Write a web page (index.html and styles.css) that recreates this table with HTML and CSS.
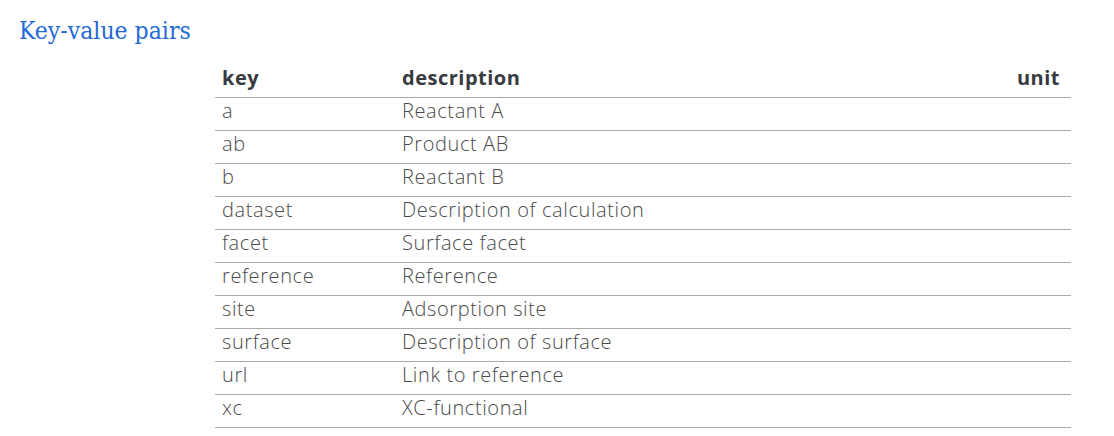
FILE: index.html
```html
<!DOCTYPE html>
<html>
<head>
<meta charset="utf-8">
<link rel="stylesheet" href="styles.css">
</head>
<body>
<h2 class="title">Key-value pairs</h2>
<div class="wrap">
<table class="kv">
<thead>
<tr><th class="c-key">key</th><th class="c-desc">description</th><th class="c-unit">unit</th></tr>
</thead>
<tbody>
<tr><td>a</td><td>Reactant A</td><td></td></tr>
<tr><td>ab</td><td>Product AB</td><td></td></tr>
<tr><td>b</td><td>Reactant B</td><td></td></tr>
<tr><td>dataset</td><td>Description of calculation</td><td></td></tr>
<tr><td>facet</td><td>Surface facet</td><td></td></tr>
<tr><td>reference</td><td>Reference</td><td></td></tr>
<tr><td>site</td><td>Adsorption site</td><td></td></tr>
<tr><td>surface</td><td>Description of surface</td><td></td></tr>
<tr><td>url</td><td>Link to reference</td><td></td></tr>
<tr><td>xc</td><td>XC-functional</td><td></td></tr>
</tbody>
</table>
</div>
</body>
</html>
```
FILE: styles.css
```css
html, body { margin: 0; padding: 0; background: #fff; }
body { font-family: "Open Sans", "Noto Sans", sans-serif; color: #4a4a4a; }
.title {
  margin: 0;
  padding: 15px 0 0 19px;
  font-family: "DejaVu Serif Condensed", "DejaVu Serif", serif;
  font-weight: normal;
  font-size: 24.5px;
  line-height: 32px;
  color: #2469d6;
}
.wrap { padding: 18px 0 0 215px; }
.kv {
  width: 856px;
  border-collapse: collapse;
  font-size: 20px;
  letter-spacing: 0.6px;
}
.kv th, .kv td {
  line-height: 24px;
  padding: 1px 7px 7px 7px;
  border-bottom: 1px solid #aaa;
  vertical-align: top;
}
.kv th {
  font-weight: 700;
  color: #373a3f;
  text-align: left;
  letter-spacing: 0.5px;
}
.kv th.c-key { width: 166px; }
.kv th.c-unit { text-align: right; padding-right: 11px; }
.kv td { font-weight: 300; }
```
